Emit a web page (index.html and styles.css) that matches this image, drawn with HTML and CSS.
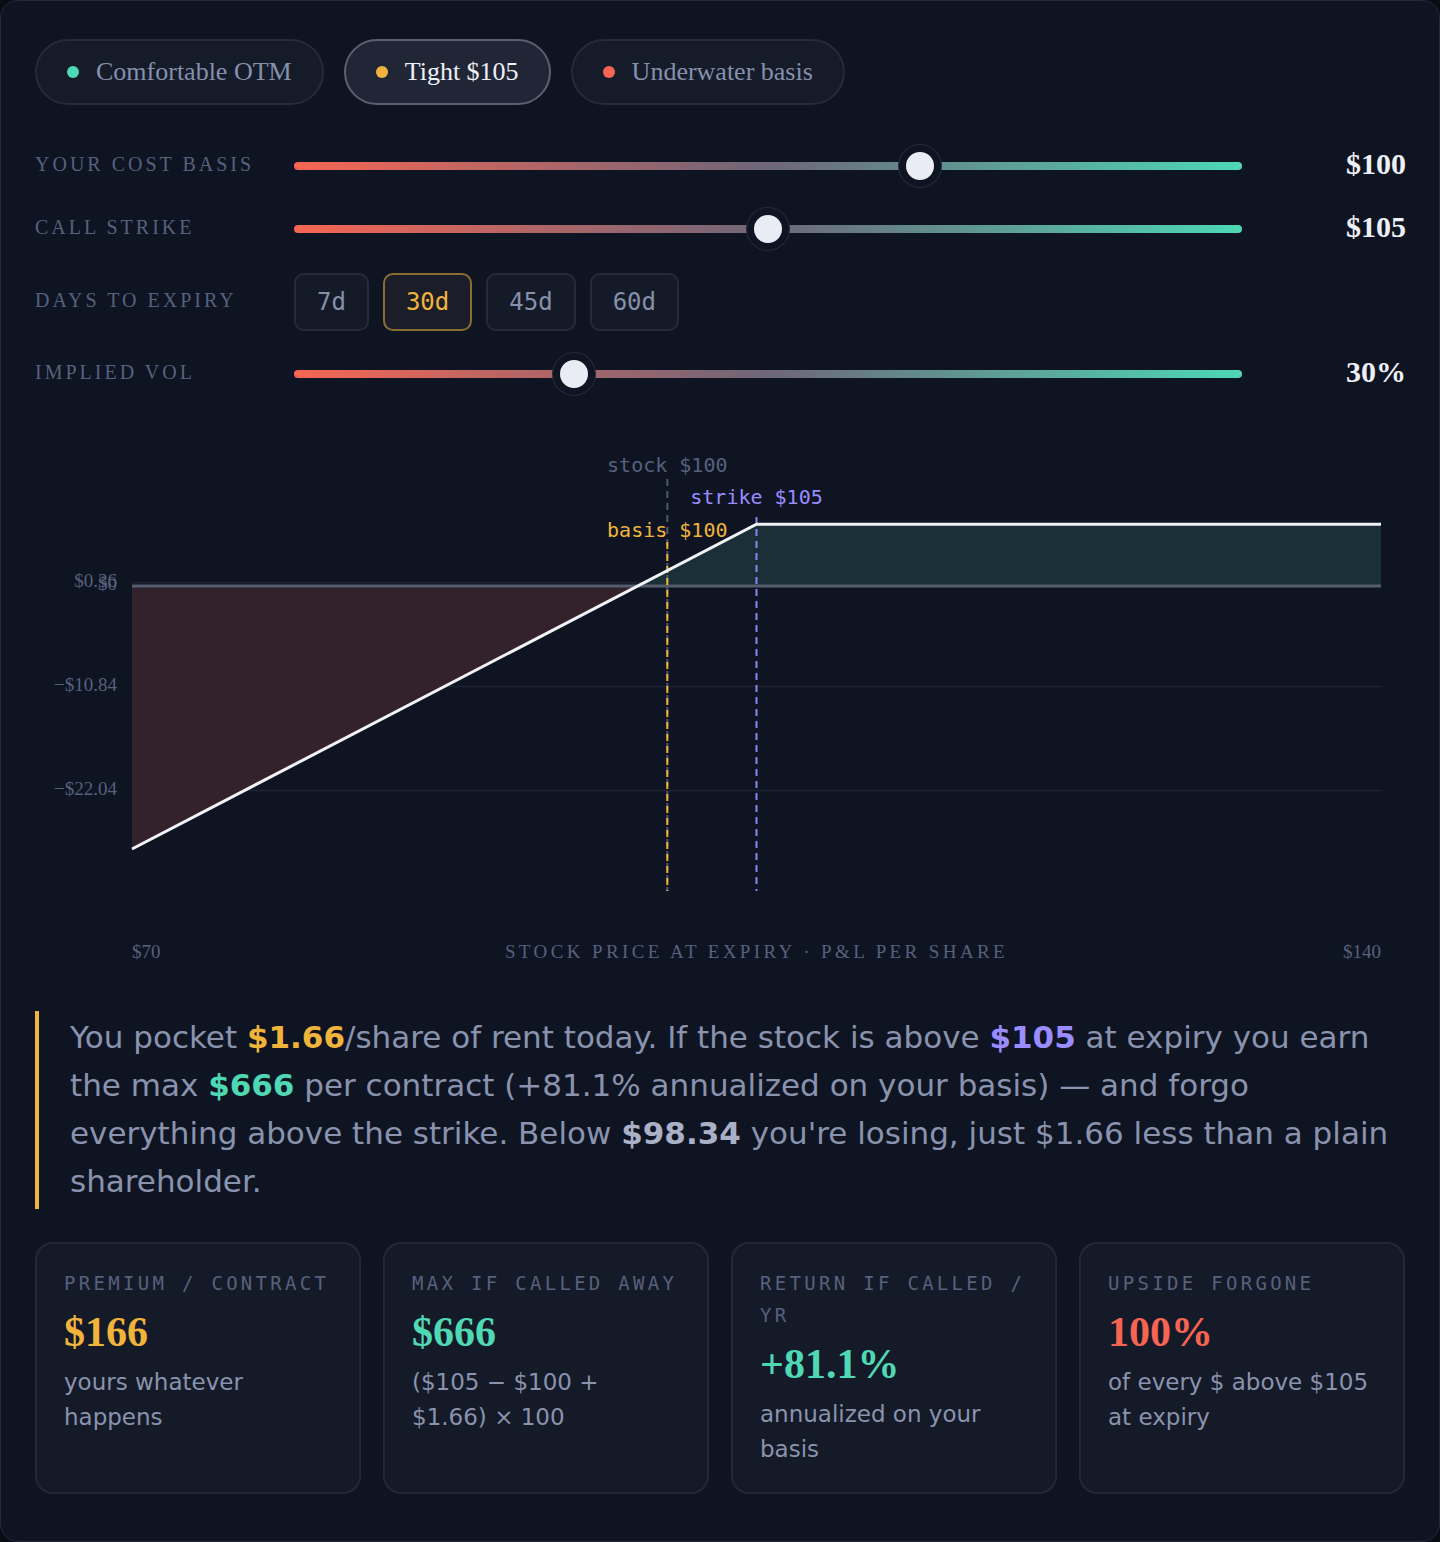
FILE: index.html
```html
<!DOCTYPE html>
<html lang="en">
<head>
    <meta charset="UTF-8">
    <meta name="viewport" content="width=device-width, initial-scale=1.0">
    <title>Covered Call Payoff</title>
    <link rel="stylesheet" href="styles.css">
</head>
<body>
    <div class="panel">
        <!-- Scenario presets -->
        <div class="presets">
            <button class="preset"><span class="dot dot-green"></span>Comfortable OTM</button>
            <button class="preset active"><span class="dot dot-gold"></span>Tight $105</button>
            <button class="preset"><span class="dot dot-red"></span>Underwater basis</button>
        </div>

        <!-- Inputs -->
        <div class="controls">
            <div class="row">
                <div class="row-label">Your cost basis</div>
                <div class="slider">
                    <div class="track"></div>
                    <div class="thumb" style="left: 66%"></div>
                </div>
                <div class="row-value">$100</div>
            </div>
            <div class="row">
                <div class="row-label">Call strike</div>
                <div class="slider">
                    <div class="track"></div>
                    <div class="thumb" style="left: 50%"></div>
                </div>
                <div class="row-value">$105</div>
            </div>
            <div class="row">
                <div class="row-label">Days to expiry</div>
                <div class="days">
                    <button class="day">7d</button>
                    <button class="day active">30d</button>
                    <button class="day">45d</button>
                    <button class="day">60d</button>
                </div>
            </div>
            <div class="row">
                <div class="row-label">Implied vol</div>
                <div class="slider">
                    <div class="track"></div>
                    <div class="thumb" style="left: 29.5%"></div>
                </div>
                <div class="row-value">30%</div>
            </div>
        </div>

        <!-- Payoff chart: $70..$140 across, P&L per share down -->
        <svg class="chart" width="1370" height="545" viewBox="0 0 1370 545">
            <line class="grid" x1="97" y1="149.7" x2="1346" y2="149.7"/>
            <line class="grid" x1="97" y1="253.6" x2="1346" y2="253.6"/>
            <line class="grid" x1="97" y1="357.5" x2="1346" y2="357.5"/>

            <polygon class="loss" points="97,153 602.7,153 97,416"/>
            <polygon class="gain" points="602.7,153 721.5,91.2 1346,91.2 1346,153"/>

            <line class="zero" x1="97" y1="153" x2="1346" y2="153"/>

            <text class="y-tick" x="82" y="150">$0.36</text>
            <text class="y-tick" x="82" y="153">$0</text>
            <text class="y-tick" x="82" y="254">−$10.84</text>
            <text class="y-tick" x="82" y="358">−$22.04</text>

            <line class="mark-stock" x1="632.3" y1="46" x2="632.3" y2="458"/>
            <line class="mark-basis" x1="632.3" y1="109" x2="632.3" y2="458"/>
            <line class="mark-strike" x1="721.5" y1="84" x2="721.5" y2="458"/>

            <polyline class="payoff" points="97,416 721.5,91.2 1346,91.2"/>

            <text class="tag tag-stock" x="632.3" y="33">stock $100</text>
            <text class="tag tag-strike" x="721.5" y="65">strike $105</text>
            <text class="tag tag-basis" x="632.3" y="98">basis $100</text>

            <text class="x-tick" x="97" y="521">$70</text>
            <text class="x-title" x="721.5" y="521">STOCK PRICE AT EXPIRY · P&amp;L PER SHARE</text>
            <text class="x-tick end" x="1346" y="521">$140</text>
        </svg>

        <p class="summary">
            You pocket <b class="gold">$1.66</b>/share of rent today. If the stock is above <b class="violet">$105</b> at expiry you earn
            the max <b class="green">$666</b> per contract (+81.1% annualized on your basis) — and forgo
            everything above the strike. Below <b class="light">$98.34</b> you're losing, just $1.66 less than a plain
            shareholder.
        </p>

        <div class="stats">
            <div class="stat">
                <div class="stat-label">Premium / contract</div>
                <div class="stat-value gold">$166</div>
                <div class="stat-note">yours whatever happens</div>
            </div>
            <div class="stat">
                <div class="stat-label">Max if called away</div>
                <div class="stat-value green">$666</div>
                <div class="stat-note">($105 − $100 + $1.66) × 100</div>
            </div>
            <div class="stat">
                <div class="stat-label">Return if called / yr</div>
                <div class="stat-value green">+81.1%</div>
                <div class="stat-note">annualized on your basis</div>
            </div>
            <div class="stat">
                <div class="stat-label">Upside forgone</div>
                <div class="stat-value red">100%</div>
                <div class="stat-note">of every $ above $105 at expiry</div>
            </div>
        </div>
    </div>
</body>
</html>
```

FILE: styles.css
```css
* {
    box-sizing: border-box;
}
body {
    margin: 0;
    background-color: #0a0d16;
    font-family: "Liberation Serif", serif;
}
.panel {
    min-height: 100vh;
    background-color: #0f1423;
    border: 1px solid #252a39;
    border-radius: 18px;
    padding: 38px 34px 46px;
}

/* presets */
.presets {
    display: flex;
    gap: 20px;
}
.preset {
    display: flex;
    align-items: center;
    height: 66px;
    padding: 0 30px;
    background-color: #161b2a;
    border: 2px solid #262b3a;
    border-radius: 33px;
    font-family: "Liberation Serif", serif;
    font-size: 26px;
    color: #8590ab;
    cursor: pointer;
}
.preset.active {
    background-color: #212636;
    border-color: #5a6071;
    color: #eef0f7;
}
.dot {
    width: 12px;
    height: 12px;
    border-radius: 50%;
    margin-right: 17px;
}
.dot-green { background-color: #4fd8b4; }
.dot-gold { background-color: #f0b43c; }
.dot-red { background-color: #f66553; }

/* inputs */
.controls {
    margin-top: 41px;
    display: flex;
    flex-direction: column;
    gap: 23px;
}
.row {
    display: grid;
    grid-template-columns: 259px 1fr 163px;
    align-items: center;
    min-height: 40px;
}
.row-label {
    font-size: 20px;
    letter-spacing: 3px;
    text-transform: uppercase;
    color: #56617d;
    margin-top: -3px;
}
.row-value {
    text-align: right;
    font-size: 30px;
    font-weight: bold;
    color: #eef0f7;
    margin-top: -4px;
    margin-right: -1px;
}
.slider {
    position: relative;
    height: 40px;
}
.track {
    position: absolute;
    left: 0;
    right: 0;
    top: 16px;
    height: 8px;
    border-radius: 4px;
    background: linear-gradient(to right, #f76553, #6e6679 50%, #4dd8b4);
}
.thumb {
    position: absolute;
    top: 20px;
    width: 42px;
    height: 42px;
    transform: translate(-50%, -50%);
    border-radius: 50%;
    background-color: #e9ecf5;
    border: 7px solid #0f1423;
    box-shadow: 0 0 0 1px #262c3c;
}
.days {
    display: flex;
    gap: 14px;
    padding-top: 1px;
}
.day {
    height: 58px;
    padding: 0 21px;
    background-color: #151a28;
    border: 2px solid #262b3a;
    border-radius: 10px;
    font-family: "DejaVu Sans Mono", monospace;
    font-size: 24px;
    color: #8590ab;
    cursor: pointer;
}
.day.active {
    background-color: #1b1e28;
    border-color: #8a6d31;
    color: #f0b43c;
}

/* chart */
.chart {
    display: block;
    margin-top: 39px;
}
.grid {
    stroke: #1d2333;
    stroke-width: 1.5;
}
.loss {
    fill: #33212c;
}
.gain {
    fill: #1a2f37;
}
.zero {
    stroke: #555c6e;
    stroke-width: 3;
}
.payoff {
    fill: none;
    stroke: #f2f3f7;
    stroke-width: 3;
}
.mark-stock,
.mark-basis,
.mark-strike {
    stroke-width: 2;
    stroke-dasharray: 7 5;
}
.mark-stock { stroke: #4e5870; }
.mark-basis { stroke: #f0b43c; }
.mark-strike { stroke: #8b84f2; }
.tag {
    font-family: "DejaVu Sans Mono", monospace;
    font-size: 20px;
    text-anchor: middle;
    dominant-baseline: middle;
}
.tag-stock { fill: #56617d; }
.tag-strike { fill: #9a8cff; }
.tag-basis { fill: #f0b43c; }
.y-tick {
    font-family: "Liberation Serif", serif;
    font-size: 19px;
    fill: #56617d;
    text-anchor: end;
    dominant-baseline: middle;
}
.x-tick {
    font-family: "Liberation Serif", serif;
    font-size: 19px;
    fill: #56617d;
    dominant-baseline: middle;
}
.x-tick.end {
    text-anchor: end;
}
.x-title {
    font-family: "Liberation Serif", serif;
    font-size: 19px;
    letter-spacing: 3.4px;
    fill: #56617d;
    text-anchor: middle;
    dominant-baseline: middle;
}

/* summary */
.summary {
    margin: 33px 0 0;
    padding: 2px 0 4px 31px;
    border-left: 4px solid #f0b43c;
    font-family: "DejaVu Sans", sans-serif;
    font-size: 31px;
    line-height: 48px;
    color: #8a93ad;
}
.summary b {
    font-weight: bold;
}
.gold { color: #f0b43c; }
.green { color: #4fd8b4; }
.violet { color: #9a8cff; }
.red { color: #f66553; }
.light { color: #aab1c6; }

/* stat cards */
.stats {
    display: grid;
    grid-template-columns: repeat(4, 1fr);
    gap: 22px;
    margin-top: 33px;
}
.stat {
    height: 252px;
    padding: 23px 27px;
    background-color: #151a29;
    border: 2px solid #232837;
    border-radius: 18px;
}
.stat-label {
    font-family: "DejaVu Sans Mono", monospace;
    font-size: 19px;
    letter-spacing: 3.3px;
    line-height: 32px;
    text-transform: uppercase;
    color: #56617d;
}
.stat-value {
    margin-top: 8px;
    font-size: 42px;
    font-weight: bold;
    line-height: 50px;
}
.stat-note {
    margin-top: 8px;
    font-family: "DejaVu Sans", sans-serif;
    font-size: 23px;
    line-height: 35px;
    color: #8a93ad;
}
```
